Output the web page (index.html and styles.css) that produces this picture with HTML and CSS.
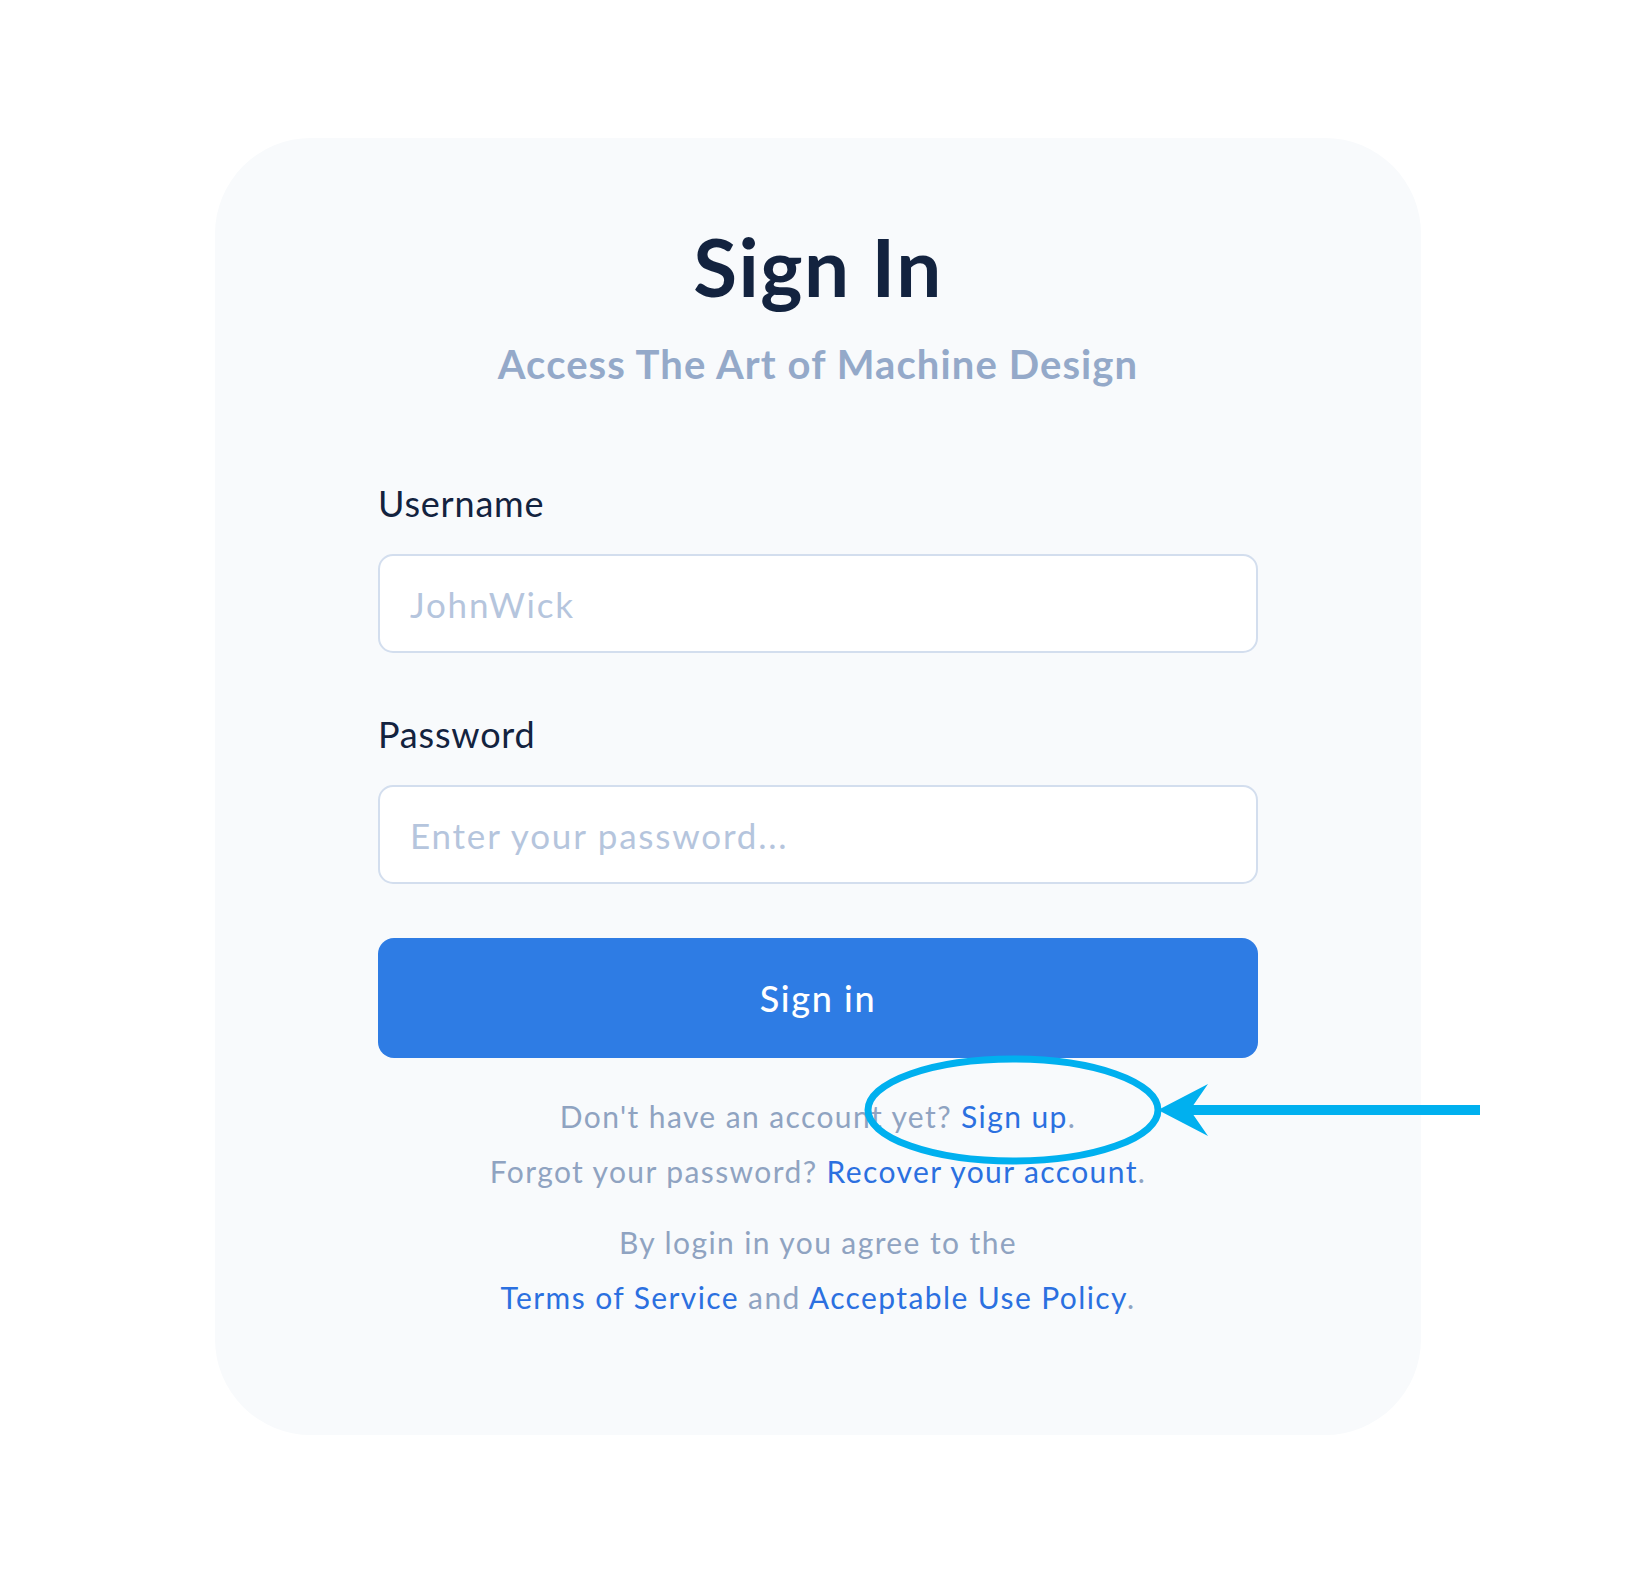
FILE: index.html
```html
<!DOCTYPE html>
<html lang="en">
<head>
  <meta charset="UTF-8">
  <meta name="viewport" content="width=device-width, initial-scale=1.0">
  <title>Sign In</title>
  <link rel="stylesheet" href="styles.css">
</head>
<body>
  <div class="card">
    <h1>Sign In</h1>
    <p class="subtitle">Access The Art of Machine Design</p>

    <form class="form" onsubmit="return false">
      <label for="username">Username</label>
      <input type="text" id="username" placeholder="JohnWick">

      <label for="password" class="second">Password</label>
      <input type="password" id="password" placeholder="Enter your password...">

      <button type="submit">Sign in</button>
    </form>

    <div class="links">
      <p>Don't have an account yet? <a href="#">Sign up</a>.</p>
      <p>Forgot your password? <a href="#">Recover your account</a>.</p>
    </div>

    <div class="terms">
      <p>By login in you agree to the</p>
      <p><a href="#">Terms of Service</a> and <a href="#">Acceptable Use Policy</a>.</p>
    </div>
  </div>

  <!-- annotation drawn over the screenshot -->
  <svg class="annotation" width="1636" height="1576" viewBox="0 0 1636 1576">
    <ellipse cx="1013" cy="1110" rx="145" ry="51" fill="none" stroke="#00b0ef" stroke-width="7"/>
    <rect x="1188" y="1105" width="292" height="10" fill="#00b0ef"/>
    <polygon points="1158,1110 1208,1084 1190,1110 1208,1136" fill="#00b0ef"/>
  </svg>
</body>
</html>
```

FILE: styles.css
```css
/* page */
body {
  margin: 0;
  background-color: #FFFFFF;
  font-family: 'Lato', 'Noto Sans', sans-serif;
  color: #13233F;
  position: relative;
  min-height: 1576px;
}
.card {
  width: 1206px;
  margin: 138px auto 0;
  padding: 80px 163px 110px;
  box-sizing: border-box;
  background-color: #F8FAFC; /* very light grey-blue */
  border-radius: 96px;
  text-align: center;
}
h1 {
  margin: 0;
  font-size: 80px;
  line-height: 96px;
  font-weight: 700;
  letter-spacing: 1.5px;
  color: #13233F;
}
.subtitle {
  margin: 26px 0 0;
  font-size: 40px;
  line-height: 48px;
  font-weight: 700;
  letter-spacing: 1.1px;
  color: #94A9C9;
}
.form {
  display: flex;
  flex-direction: column;
  margin-top: 93px;
  text-align: left;
}
label {
  font-size: 36px;
  line-height: 44px;
  letter-spacing: 0.8px;
  color: #13233F;
  margin-bottom: 29px;
}
label.second {
  margin-top: 59px;
}
input {
  height: 99px;
  box-sizing: border-box;
  padding: 0 30px;
  border: 2px solid #D3DEEE;
  border-radius: 15px;
  background-color: #FFFFFF;
  font-family: 'Lato', 'Noto Sans', sans-serif;
  font-size: 35px;
  letter-spacing: 1.8px;
  color: #13233F;
  outline: none;
}
input::placeholder {
  color: #B5C5DD;
}
button {
  margin-top: 54px;
  height: 120px;
  border: none;
  border-radius: 16px;
  background-color: #2E7CE4;
  color: #FFFFFF;
  font-family: 'Lato', 'Noto Sans', sans-serif;
  font-size: 36px;
  font-weight: 500;
  letter-spacing: 1.6px;
  cursor: pointer;
}
.links {
  margin-top: 31px;
}
.links p,
.terms p {
  margin: 0;
  font-size: 30px;
  line-height: 55px;
  letter-spacing: 1.4px;
  color: #8FA3C1;
}
.terms {
  margin-top: 16px;
}
a {
  color: #2B70E0;
  text-decoration: none;
}
/* callout drawn over the page */
.annotation {
  position: absolute;
  left: 0;
  top: 0;
  pointer-events: none;
}
```
